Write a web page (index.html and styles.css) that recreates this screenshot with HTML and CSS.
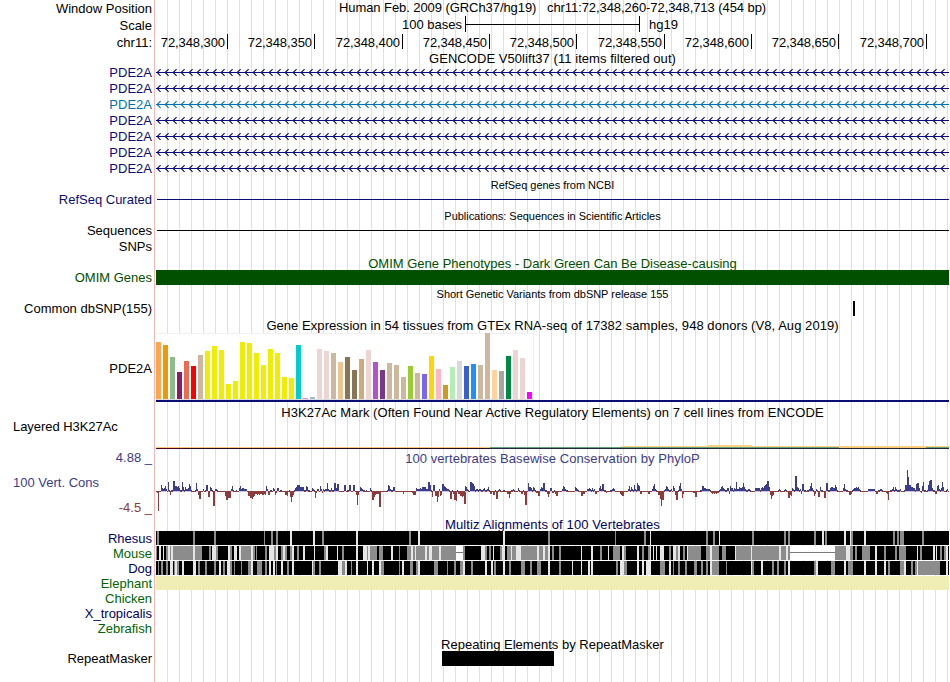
FILE: index.html
```html
<!DOCTYPE html>
<html lang="en">
<head>
    <meta charset="UTF-8">
    <title>Human chr11:72,348,260-72,348,713</title>
    <link rel="stylesheet" href="styles.css">
</head>
<body>
    <main class="browser">
        <!-- Ruler -->
        <div class="row h17"><div class="label">Window Position</div><div class="title t-pos">Human Feb. 2009 (GRCh37/hg19) &nbsp; chr11:72,348,260-72,348,713 (454 bp)</div></div>
        <div class="row h17">
            <div class="label">Scale</div>
            <div class="scale"><span class="bases">100 bases</span><div class="bracket"></div><span>hg19</span></div>
        </div>
        <div class="row h16">
            <div class="label">chr11:</div>
            <div class="ticks">
                <span>72,348,300</span><span>72,348,350</span><span>72,348,400</span><span>72,348,450</span><span>72,348,500</span><span>72,348,550</span><span>72,348,600</span><span>72,348,650</span><span>72,348,700</span>
            </div>
        </div>

        <!-- Genes -->
        <div class="row h14"><div class="label"></div><div class="title low">GENCODE V50lift37 (11 items filtered out)</div></div>
        <div class="row h16 navy"><div class="label">PDE2A</div><div class="gene"></div></div>
        <div class="row h16 navy"><div class="label">PDE2A</div><div class="gene"></div></div>
        <div class="row h16 blue"><div class="label">PDE2A</div><div class="gene"></div></div>
        <div class="row h16 navy"><div class="label">PDE2A</div><div class="gene"></div></div>
        <div class="row h16 navy"><div class="label">PDE2A</div><div class="gene"></div></div>
        <div class="row h16 navy"><div class="label">PDE2A</div><div class="gene"></div></div>
        <div class="row h16 navy"><div class="label">PDE2A</div><div class="gene"></div></div>

        <div class="row h15"><div class="label"></div><div class="title small">RefSeq genes from NCBI</div></div>
        <div class="row h16 navy"><div class="label">RefSeq Curated</div><div class="line"></div></div>
        <div class="row h15"><div class="label"></div><div class="title small">Publications: Sequences in Scientific Articles</div></div>
        <div class="row h16"><div class="label">Sequences</div><div class="line"></div></div>
        <div class="row h16"><div class="label">SNPs</div></div>
        <div class="row h16 omim"><div class="label"></div><div class="title lower t-omim">OMIM Gene Phenotypes - Dark Green Can Be Disease-causing</div></div>
        <div class="row h15 omim"><div class="label">OMIM Genes</div><div class="block"></div></div>
        <div class="row h16"><div class="label"></div><div class="title small t-snp">Short Genetic Variants from dbSNP release 155</div></div>
        <div class="row h15"><div class="label">Common dbSNP(155)</div><div class="snp"></div></div>

        <!-- Expression -->
        <div class="row h17"><div class="label"></div><div class="title lower">Gene Expression in 54 tissues from GTEx RNA-seq of 17382 samples, 948 donors (V8, Aug 2019)</div></div>
        <div class="row gtex"><div class="label">PDE2A</div><div class="gtex-track"><div class="bars" id="bars"></div></div></div>

        <!-- Histone marks -->
        <div class="row histone">
            <div class="label left">Layered H3K27Ac</div>
            <div class="histone-track">
                <div class="title">H3K27Ac Mark (Often Found Near Active Regulatory Elements) on 7 cell lines from ENCODE</div>
                <svg id="histone" width="793" height="4"></svg>
            </div>
        </div>

        <!-- Conservation -->
        <div class="row phylop">
            <div class="scale-labels">
                <span class="limit">4.88 _</span>
                <span>100 Vert. Cons</span>
                <span class="limit min">-4.5 _</span>
            </div>
            <div class="phylop-track">
                <div class="title">100 vertebrates Basewise Conservation by PhyloP</div>
                <svg id="wiggle" width="793" height="50"></svg>
            </div>
        </div>

        <!-- Alignments -->
        <div class="row h14 dark"><div class="label"></div><div class="title t-multiz">Multiz Alignments of 100 Vertebrates</div></div>
        <div class="row h15 dark"><div class="label">Rhesus</div><svg id="rhesus" width="793" height="14"></svg></div>
        <div class="row h15 green"><div class="label">Mouse</div><svg id="mouse" width="793" height="14"></svg></div>
        <div class="row h15 dark"><div class="label">Dog</div><svg id="dog" width="793" height="14"></svg></div>
        <div class="row h15 green"><div class="label">Elephant</div><div class="missing"></div></div>
        <div class="row h15 green"><div class="label">Chicken</div></div>
        <div class="row h15 dark"><div class="label">X_tropicalis</div></div>
        <div class="row h15 green"><div class="label">Zebrafish</div></div>

        <div class="row h15"><div class="label"></div><div class="title low t-rmsk">Repeating Elements by RepeatMasker</div></div>
        <div class="row h15"><div class="label">RepeatMasker</div><div class="repeat"></div></div>
    </main>
    <script src="script.js"></script>
</body>
</html>
```

FILE: styles.css
```css
* {
    box-sizing: border-box;
}

body {
    margin: 0;
    background: #fff;
    font-family: "Liberation Sans", Arial, sans-serif;
    font-size: 13px;
    color: #000;
}

.browser {
    width: 949px;
    height: 682px;
    overflow: hidden;
    background:
        linear-gradient(to right, #fff 154px, #ffb4b4 154px, #ffb4b4 155px, #fff 155px, #fff 156px, transparent 156px),
        linear-gradient(to right, #dcdcfa 1px, transparent 1px) 11px 0 / 12px 100%;
}

.row {
    display: flex;
    white-space: nowrap;
}

.h14 { height: 14px; line-height: 16px; }
.h15 { height: 15px; line-height: 15px; }
.h16 { height: 16px; line-height: 16px; }
.h17 { height: 17px; line-height: 16px; }

.label {
    flex: none;
    width: 156px;
    padding-right: 4px;
    text-align: right;
}

.h16 .label,
.h17 .label {
    line-height: 18px;
}

.title {
    flex: 1;
    text-align: center;
    letter-spacing: 0.055px;
}

.low { line-height: 18px; }
.lower { line-height: 20px; }

.t-pos { letter-spacing: -0.07px; }
.t-omim { letter-spacing: 0; }
.t-multiz { letter-spacing: 0.11px; }
.t-rmsk { letter-spacing: 0.01px; }

.small {
    font-size: 11px;
    padding-top: 2px;
    letter-spacing: -0.03px;
}

.t-snp {
    padding-top: 1px;
}

.navy { color: #0c0c78; }
.blue { color: #0072b2; }
.dark { color: #000064; }
.green { color: #006400; }
.omim { color: #005000; }

/* Ruler */
.scale {
    display: flex;
}

.bases {
    width: 306px;
    text-align: right;
    margin-right: 3px;
}

.bracket {
    width: 175px;
    height: 16px;
    margin: -1px 9px 0 0;
    border: solid #000;
    border-width: 0 1px;
    background: linear-gradient(#000, #000) 0 8px / 100% 1px no-repeat;
}

.ticks {
    display: grid;
    grid-template-columns: 72px 87px 88px 87px 87px 88px 87px 87px 88px;
    letter-spacing: -0.08px;
}

.ticks span {
    height: 15px;
    padding: 1px 2px 0 0;
    border-right: 1px solid #000;
    text-align: right;
}

/* Genes */
.gene {
    flex: 1;
    background: linear-gradient(currentColor, currentColor) 0 8px / 100% 1px no-repeat;
}

.gene svg {
    display: block;
}

.line {
    flex: 1;
    height: 1px;
    margin: 8px 0 0 1px;
    background: currentColor;
}

.block {
    flex: 1;
    background: #005000;
}

.snp {
    width: 2px;
    margin-left: 697px;
    background: #000;
}

/* Expression */
.gtex {
    height: 69px;
    line-height: 71px;
}

.gtex-track {
    flex: 1;
    border-bottom: 2px solid #0c0c78;
}

.bars {
    display: flex;
    align-items: flex-end;
    gap: 2px;
    width: 378px;
    height: 67px;
    background: #fff;
    border-bottom: 1px solid #dcdcdc;
    box-shadow: inset 0 1px #f0f0f0, inset -1px 0 #f0f0f0;
}

.bar {
    width: 5px;
}

/* Histone marks */
.histone {
    height: 48px;
}

.left {
    padding: 17px 0 0 13px;
    text-align: left;
    line-height: 16px;
    letter-spacing: -0.05px;
}

.histone-track,
.phylop-track {
    width: 793px;
}

.histone-track .title {
    height: 43px;
    line-height: 21px;
}

.histone-track svg,
.phylop-track svg {
    display: block;
}

/* Conservation */
.phylop {
    height: 67px;
    line-height: 17px;
    color: #3c3c8c;
}

.scale-labels {
    display: flex;
    flex-direction: column;
    justify-content: space-between;
    width: 156px;
    height: 67px;
    margin-top: -1px;
    padding: 0 4px 0 13px;
}

.limit {
    text-align: right;
}

.min {
    color: #8c3c3c;
}

.phylop-track .title {
    height: 16px;
    line-height: 18px;
}

/* Alignments */
.missing {
    flex: 1;
    height: 14px;
    background: #f0eeb4;
}

.repeat {
    width: 112px;
    margin-left: 286px;
    background: #000;
}
```

FILE: script.js
```js
const LEFT = 156;
const WIDTH = 793;

function rect(x, y, w, h, fill) {
    return `<rect x="${x}" y="${y}" width="${w}" height="${h}" fill="${fill}"/>`;
}

// strand arrows, one every 8px
document.querySelectorAll('.gene').forEach((gene) => {
    let d = '';
    for (let x = 1.2; x < WIDTH; x += 8) {
        d += `M${x + 3.4} 5.1L${x} 8.5L${x + 3.4} 11.9`;
    }
    gene.innerHTML = `<svg width="${WIDTH}" height="16"><path d="${d}" fill="none" stroke="currentColor" stroke-width="1.1"/></svg>`;
});

// GTEx tissues: height, color
const tissues = [
    [57, '#ffa54f'], [54, '#ee9a00'], [42, '#8fbc8f'], [27, '#8b1c62'], [38, '#ee6a50'], [33, '#ff0000'],
    [44, '#cdb79e'], [48, '#eeee00'], [53, '#eeee00'], [49, '#eeee00'], [15, '#eeee00'], [18, '#eeee00'],
    [57, '#eeee00'], [56, '#eeee00'], [46, '#eeee00'], [34, '#eeee00'], [50, '#eeee00'], [46, '#eeee00'],
    [22, '#eeee00'], [21, '#eeee00'], [54, '#00cdcd'], [1, '#ee82ee'], [2, '#9ac0cd'], [50, '#eed5d2'],
    [48, '#eed5d2'], [46, '#cdb79e'], [37, '#eec591'], [42, '#8b7355'], [29, '#8b7355'], [40, '#cdaa7d'],
    [49, '#eed5d2'], [37, '#b452cd'], [29, '#7a378b'], [36, '#cdb79e'], [34, '#cdb79e'], [22, '#cdb79e'],
    [33, '#9acd32'], [26, '#cdb79e'], [25, '#7a67ee'], [43, '#ffd700'], [30, '#ffb6c1'], [14, '#cd9b1d'],
    [32, '#b4eeb4'], [38, '#d9d9d9'], [33, '#3a5fcd'], [35, '#1e90ff'], [34, '#cdb79e'], [66, '#cdb79e'],
    [29, '#ffd39b'], [28, '#a6a6a6'], [43, '#008b45'], [49, '#eed5d2'], [41, '#eed5d2'], [7, '#ff00ff']
];
document.getElementById('bars').innerHTML = tissues
    .map(([h, color]) => `<div class="bar" style="height: ${h}px; background: ${color}"></div>`)
    .join('');

// H3K27Ac signal
document.getElementById('histone').innerHTML =
    rect(0, 2, 334, 1, '#ffc878') + rect(334, 2, WIDTH, 1, '#64a078') +
    rect(465, 1, WIDTH, 1, '#ffd282') + rect(552, 0, 44, 1, '#ffd282') +
    rect(683, 2, 87, 1, '#ffc878') +
    rect(0, 3, 28, 1, '#500028') + rect(28, 3, 306, 1, '#280a28') + rect(334, 3, WIDTH, 1, '#232841');

// PhyloP scores: start column, then one height per pixel
const scores = `157:-2,-20 161:6,3,2,3,5,2,0,9,1,-4 171:1,1,10,10,5,5,4,5,3,1,1,9,4,1,4,2,2,3,7,5,1
    195:1,8,2,-4,-8,-8 203:2,0,1,6,6,-6,-6,4,3,1,-15,-15,2,2,1 225:-5,-9,-9,-7,-7,-7,2,5,1 236:1 239:3,5,2,3,3,2,2,2
    248:-5,-5,-7,-7,-8,-6,-5,-3,-3,-4,-3,-4,-3,-3,-4,-4,-3,-4,5,2,-4,-4,1,1,0,3,2,-4,-2,3,3 280:1,1 285:-4,-4,-5,0,1,-6,-11,-6,-4
    294:1,3,4,6,6,6,4,4,4,4,1,1,5,4,1,1 312:3,2,1,-7,-2,2,2 320:5,2,-2,2,1,2,2,8,2,1,1,3,1,1,8,8,3,7,7
    344:6,6,0,1,1,6,6,0,0,6,6,0,-4,-14,-4,0,4,3,2,1,1,0,1 370:3,1,-9,-9,-6,-4,-3,-3,-3,-16,-16
    387:1,6,5,2,1,1,4,4 403:-3 412:-2,-4,-4,-4,3,2,2,2,3,2,4,4,4,4,2,2,9,9,6,1,-6,6,6,-5,-5,-11,-6,2,-5,-4,7,7,5,4,3,2,2,1,-8,-8,1,-3,-9,-9,-10,1,-3,-3,-5,-5,-6,-5,-13,-13
    465:5,4,2,1,0,9,9,8,7,5,1,2,2,1,2,2,1,1,2,3,1,1,2,4,1,-3,-3,0,-4,-4,1,-8,-8,1,2,1 503:1,1 507:-3,-3,-7,-3,1,1,2,1 518:3,1 521:-3,-3,1,-4,-14,-14
    528:8,4,4,3,1,4,3,1,-2,-2,-5,-5,2,4,3,8,8,1,1,-3,-6,-3,3,3,-2,-2,1,-3,-5,-5 562:2,5,4,2,1,1 575:4,3,2,1 581:-5,-5,-3,-3 587:2,2,3,2,1,3,1,2,-3,-3 599:3,5,2,7,7,1,1,-2 610:1,1,2,3,2
    620:-3,-4,-5,-5 628:2,5,1,4,2,1,6,2,1,8,6,5,-3,-3 648:-3,-3 652:2,5,7,2,1,-1,-4,-4,-8,-15,-9,-9,1,2,5,4,2,1,1,2,0,5,3,-4,-9,-9,1,5,8,2,-7,-3 693:-2,-2,-6,-6
    700:1,1,5,5,3,3,2,2,2,2,1,-2,-3,-2,-3,-2,-3,-2,-2,1,2,4,5,3,2,1,1,3,3,-3,5,3,3,1,3,2,9,2,2,4,3,3,4,8,4,2,1,1,2,2,1
    755:3,3,3,3,3,1,3,4,3,5,6,7,10,10,4,-4,-8,-5,-4 778:1,2,1 784:1,2,1,-1,-7,-7,-4,-5,3,2,1,15,15,4,3,1,2,-3,7,7,1,1,-1,1,1,2,5,8,3,1,-5,-3,2,1,-6,-6,4,1,1,-1,-7,-7,8,8,1,1,3,4,4,3,3,6,4,1 843:3,7,2,1,1,0,-4,-4,-3,1,2,3,3,4,3,4,2,1
    868:2,2,2,2,2,2,2,0,-3,-3,1,1,2,2,1 886:-2,-3,-9,0,1,1,2,4,1,4,2,1,1,1,2 904:1,6,6,21,14,6,6,4,4,3,3,1,7,8,8,3,0,-2,5,9,1,1,-1,1,6,10,11,11,3,1,1,-3,-3,5,6,2,1,3,9,4,0,0,1,2`;
let bars = rect(0, 25, WIDTH, 1, '#8c3c3c');
scores.trim().split(/\s+/).forEach((run) => {
    const [start, values] = run.split(':');
    values.split(',').map(Number).forEach((v, i) => {
        const x = Number(start) + i - LEFT;
        if (v > 0) bars += rect(x, 25 - v, 1, v, '#3c3c8c') + (v > 1 ? rect(x, 25, 1, 1, '#c8c8e6') : '');
        if (v < 0) bars += rect(x, 25, 1, -v, '#8c3c3c');
    });
});
document.getElementById('wiggle').innerHTML = bars;

// Alignments: column, shade (g gray, l light, w unaligned), width
const species = {
    rhesus: `157g2 193g2 214g2 264g1 271g2 276g2 290l2 313l2 322g2 356l2 409g2 418l2 503l2 548g2 615g1 644g2 650l1
        706g2 713g2 719l1 752g2 784g2 788g2 814g2 822l2 825g2 844l2 850l1 851g2 864l2 893g2 897g2 900g4 922g2`,
    mouse: `156g1 159l2 163l1 166g2 168l2 170g1 171l2 173g20 193l2 195g7 209g2 212l4 216g2 228l2 230g2 234l3 239l2 241g10
        251l2 253g2 256g1 265g2 269l5 274g2 276l2 281g2 283l2 285g2 290g2 292l2 297g2 303l2 314l1 324g2 326l2 337l1 342g2
        356l2 363l4 367g1 368l2 370g7 379g4 391l2 399g1 407g4 411l2 413g2 415l1 416g9 425l2 427g2 429l3 432g7 439l2 441g15
        456w7 463g2 481l4 485g2 489g2 493l1 500g2 502l3 507g4 511l1 512g4 516l5 521g16 537l2 539g4 543l2 545g3 548l2
        552g2 559g2 581l1 591l2 600g2 608l1 613g7 622l2 624g2 637l2 642g2 648g2 650l1 653l1 656l1 660l4 669g2 673l3 676g2
        678l2 683g2 687l1 688g13 706g4 710l2 712g7 722g4 735l1 736g15 751l1 752g27 779l2 781g5 786l2 788g2 790w45
        835g11 846l4 850g3 855g2 862g8 875l2 884g2 895g2 899g7 917l1 920g2 933l2 936l1 940g2 944g2 946l2`,
    dog: `158g1 161g2 166g2 170l3 174g1 175l2 177g2 182l2 193l3 198g2 205g2 214g2 219l2 223g2 227l3 230g2 234g1 241g1
        248g4 251l2 257g5 265g2 269l2 273l2 276g1 281l2 287g2 292l2 312l1 313g2 319g2 338l5 342g4 345l2 351g1 356l2 367l1
        372l2 379l2 381g3 399g1 402l2 410g3 416g2 418l2 434g4 447g1 454g2 460g3 463l2 471g2 485l2 491l2 494g2 503l2 509g2
        521g4 530g2 537g4 548l2 559g2 572l1 581l1 588l2 591l2 616g2 620l4 624g3 637l2 642l2 646l5 660g5 669l2 673g1 678g2
        685g2 694g3 701g2 706g2 710l2 712g7 726g1 751l1 752g2 761l2 772g2 777g2 784g2 788l2 814g2 816l2 831g4 844l2 848g5
        864l2 875l2 884l2 888g2 900g4 904l2 911g2 915g2 917l1 918g22 946l2`
};
const shades = { g: '#8c8c8c', l: '#e6e6e6', w: '#ffffff' };
Object.entries(species).forEach(([name, runs]) => {
    let out = rect(0, 0, WIDTH, 14, '#000');
    runs.trim().split(/\s+/).forEach((run) => {
        const [, x, shade, w] = run.match(/(\d+)([glw])(\d+)/);
        out += rect(x - LEFT, 0, w, 14, shades[shade]);
        if (shade === 'w') out += rect(x - LEFT, 6, w, 1, '#787878');
    });
    document.getElementById(name).innerHTML = out;
});
```
